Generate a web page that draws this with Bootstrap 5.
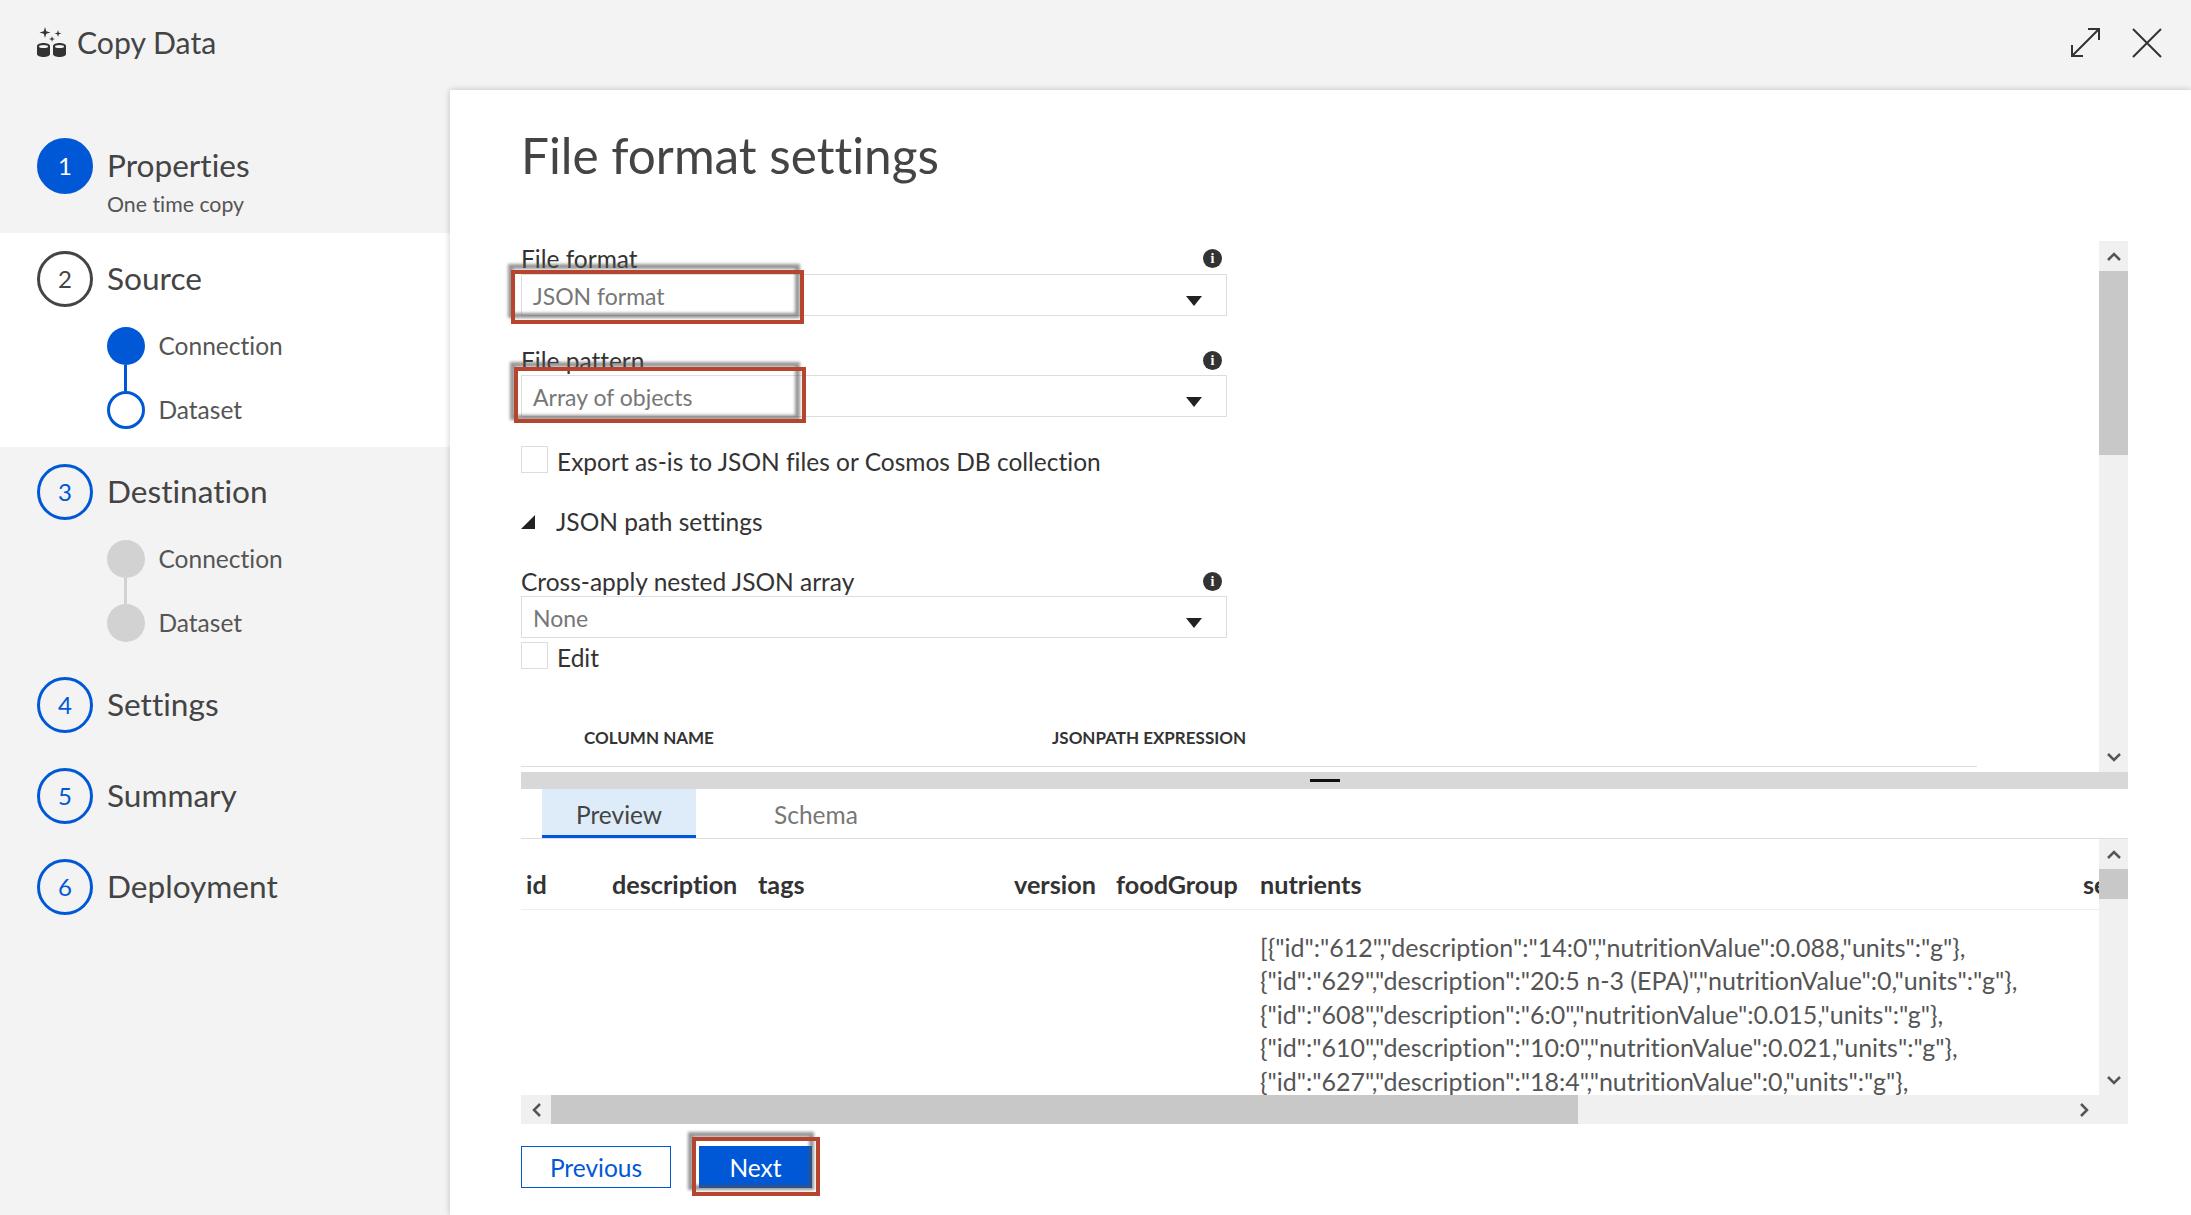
<!DOCTYPE html>
<html lang="en">
<head>
    <meta charset="UTF-8">
    <meta name="viewport" content="width=device-width, initial-scale=1.0">
    <title>Copy Data</title>
    <link href="https://cdn.jsdelivr.net/npm/bootstrap@5.3.0/dist/css/bootstrap.min.css" rel="stylesheet">
    <style>
        html, body { height: 1215px; overflow: hidden; }
        body { background: #f3f3f3; color: #444; font-family: "Lato", "Open Sans", sans-serif; font-size: 24.5px; font-variant-ligatures: none; }
        .top-bar { height: 85px; padding: 0 29px 0 37px; }
        .app-name { font-size: 30.2px; margin-left: 10px; line-height: 1; }
        .top-tools { gap: 31px; }
        .main-wrap { height: 1130px; }

        /* wizard steps */
        .wiz-side { width: 450px; flex: none; }
        .wiz-block { padding: 18px 0 18px 37px; }
        .wiz-block.first { padding-top: 53px; padding-bottom: 19px; height: 148px; }
        .wiz-block.open { background: #fff; }
        .wiz-block.plain { padding-top: 17px; padding-bottom: 0; }
        .wiz-block.tail { padding-top: 35px; padding-bottom: 0; }
        .step-dot { width: 56px; height: 56px; flex: none; border: 3px solid #0058d6; color: #0058d6; font-size: 24px; }
        .step-dot.on { background: #0058d6; color: #fff; }
        .step-dot.cur { border-color: #444; color: #444; }
        .step-name { font-size: 31.6px; margin-left: 14px; line-height: 1; color: #444; }
        .step-note { font-size: 21.3px; line-height: 20px; margin-left: 70px; color: #555; }
        .sub-list { margin: 20px 0 0 70px; }
        .sub-row { height: 38px; }
        .sub-dot { width: 38px; height: 38px; flex: none; }
        .sub-dot.fill { background: #0058d6; }
        .sub-dot.ring { border: 3px solid #0058d6; background: #fff; }
        .sub-dot.idle { background: #d2d2d2; }
        .sub-name { font-size: 24.5px; margin-left: 13.500px; color: #555; }
        .sub-link { width: 3px; height: 26px; margin-left: 17px; background: #0058d6; }
        .sub-link.idle { background: #d2d2d2; }

        /* right panel */
        .work-panel { margin-top: 5px; padding: 0 63px 0 71px; background: #fff; box-shadow: 0 0 6px rgba(0,0,0,.22); position: relative; }
        .page-title { height: 151px; margin: 0; font-size: 49.5px; font-weight: 400; line-height: 130px; color: #444; }
        .upper-pane { height: 531px; }
        .upper-form { padding-top: 2px; width: 1578px; }
        .fld-label { height: 31px; line-height: 33px; width: 706px; color: #333; }
        .fld-label.spaced { margin-top: 29px; height: 30px; }
        .info-mark { width: 19px; height: 19px; background: #333; color: #fff; font: 700 14px/19px "Liberation Serif", serif; text-align: center; margin-right: 5px; }
        .dd-box { width: 706px; height: 42px; padding: 0 14px 0 11px; border: 1.5px solid #ddd; color: #777; background: #fff; font-size: 23px; }
        .dd-box span { padding-top: 2px; }
        .dd-box svg { margin-right: 10px; margin-top: 11px; }
        .tick-row { height: 27px; color: #333; }
        .tick-row span { padding-top: 6px; }
        .tick-row.first { margin-top: 29px; }
        .tick-row.near { margin-top: 4px; }
        .tick-box { width: 27px; height: 27px; margin: 0 9px 0 0; border: 1.5px solid #ddd; border-radius: 0 !important; flex: none; }
        .path-row { margin-top: 34px; height: 30px; color: #333; }
        .path-row svg { margin-right: 21px; }
        .cols-head { margin-top: 50px; height: 48px; width: 1456px; border-bottom: 1.5px solid #ddd; font-size: 17px; font-weight: 700; line-height: 38px; color: #333; }
        .cols-head .c1 { width: 531px; padding-left: 63px; }
        .v-scroll { width: 29px; flex: none; background: #f0f0f0; height: 100%; }
        .v-btn { height: 30px; }
        .v-thumb { background: #c8c8c8; }
        .v-thumb.big { height: 184px; }
        .v-thumb.small { height: 30px; }
        .v-corner { height: 29px; }
        .splitter { height: 17px; background: #d8d8d8; }
        .split-grip { width: 30px; height: 3px; background: #111; }

        .tab-strip { height: 50px; padding-left: 21px; border-bottom: 1.5px solid #ddd; }
        .tab-strip .nav-link { height: 49px; padding: 0; font-size: 24.5px; line-height: 51px; text-align: center; color: #777; width: 154px; }
        .tab-strip .nav-link.active { background: #deecf9; color: #444; border-bottom: 3px solid #0058d6; }
        .tab-strip .nav-link.other { width: 242px; text-align: left; padding-left: 78px; }

        .lower-pane { height: 285px; }
        .grid-col { width: 1578px; }
        .grid-view { height: 256px; overflow: hidden; }
        .prev-grid { width: 1700px; table-layout: fixed; border-collapse: collapse; }
        .prev-grid th { height: 70px; padding: 23px 0 0 5px; font-weight: 700; font-size: 25.2px; color: #333; border-bottom: 1.5px solid #eee; white-space: nowrap; overflow: hidden; }
        .prev-grid td { padding: 21px 0 0 5px; vertical-align: top; color: #555; font-size: 25px; line-height: 33.6px; white-space: nowrap; }
        .h-scroll { height: 29px; background: #f0f0f0; }
        .h-btn { width: 30px; flex: none; }
        .h-thumb { width: 1027px; background: #c8c8c8; }

        .foot-row { margin-top: 22px; gap: 28px; }
        .wiz-btn { height: 42px; padding: 2px 0 0; border-radius: 0; font-size: 24.5px; line-height: 38px; }
        .wiz-btn.back { width: 150px; border: 1.5px solid #0058d6; color: #0058d6; background: #fff; }
        .wiz-btn.go { width: 113px; border: 0; background: #0058d6; color: #fff; }

        /* red call-out frames drawn over the screenshot */
        .anno-shade, .anno-red { position: absolute; pointer-events: none; }
        .anno-shade { border: 5px solid rgba(80,80,80,.6); filter: blur(1.5px); }
        .anno-red { border: 4px solid #b5452f; }
        .anno-a .anno-shade { left: -13px; top: -10px; width: 292px; height: 54px; }
        .anno-a .anno-red { left: -10px; top: -4px; width: 293px; height: 54px; }
        .anno-b .anno-shade { left: -11px; top: -13px; width: 290px; height: 58px; }
        .anno-b .anno-red { left: -7px; top: -8px; width: 292px; height: 56px; }
        .anno-c .anno-shade { left: -11px; top: -14px; width: 126px; height: 58px; }
        .anno-c .anno-red { left: -7px; top: -9px; width: 128px; height: 59px; }
    </style>
</head>
<body>

    <div class="top-bar d-flex align-items-center justify-content-between">
        <div class="d-flex align-items-center">
            <svg width="30" height="30" viewBox="0 0 30 30">
                <g fill="#333">
                    <path d="M8 0l1.2 4.3 4.3 1.2-4.3 1.2L8 11 6.8 6.7 2.500 5.500l4.300-1.200z"/>
                    <path d="M21 3l.8 2.700 2.700.8-2.700.8-.8 2.700-.8-2.700-2.700-.8 2.700-.8z"/>
                    <path d="M15 9l.7 2.300 2.300.7-2.300.7-.7 2.300-.7-2.300-2.300-.7 2.300-.7z"/>
                    <path d="M0 19c0-4 13-4 13 0v8c0 4-13 4-13 0z"/>
                    <path d="M16 19c0-4 13-4 13 0v8c0 4-13 4-13 0z"/>
                </g>
                <ellipse cx="6.500" cy="19.500" rx="4.500" ry="1.500" fill="#f3f3f3"/>
                <ellipse cx="22.500" cy="19.500" rx="4.500" ry="1.500" fill="#f3f3f3"/>
            </svg>
            <span class="app-name">Copy Data</span>
        </div>
        <div class="top-tools d-flex align-items-center">
            <svg width="31" height="31" viewBox="0 0 31 31" fill="none" stroke="#333" stroke-width="2">
                <path d="M2 29L29 2M18 2h11v11M2 18v11h11"/>
            </svg>
            <svg width="30" height="30" viewBox="0 0 30 30" fill="none" stroke="#333" stroke-width="2">
                <path d="M1 1l28 28M29 1L1 29"/>
            </svg>
        </div>
    </div>

    <div class="main-wrap d-flex">
        <div class="wiz-side">
            <div class="wiz-block first">
                <div class="d-flex align-items-center">
                    <div class="step-dot on rounded-circle d-flex align-items-center justify-content-center">1</div>
                    <div class="step-name">Properties</div>
                </div>
                <div class="step-note">One time copy</div>
            </div>
            <div class="wiz-block open">
                <div class="d-flex align-items-center">
                    <div class="step-dot cur rounded-circle d-flex align-items-center justify-content-center">2</div>
                    <div class="step-name">Source</div>
                </div>
                <div class="sub-list">
                    <div class="sub-row d-flex align-items-center"><div class="sub-dot fill rounded-circle"></div><div class="sub-name">Connection</div></div>
                    <div class="sub-link"></div>
                    <div class="sub-row d-flex align-items-center"><div class="sub-dot ring rounded-circle"></div><div class="sub-name">Dataset</div></div>
                </div>
            </div>
            <div class="wiz-block plain">
                <div class="d-flex align-items-center">
                    <div class="step-dot rounded-circle d-flex align-items-center justify-content-center">3</div>
                    <div class="step-name">Destination</div>
                </div>
                <div class="sub-list">
                    <div class="sub-row d-flex align-items-center"><div class="sub-dot idle rounded-circle"></div><div class="sub-name">Connection</div></div>
                    <div class="sub-link idle"></div>
                    <div class="sub-row d-flex align-items-center"><div class="sub-dot idle rounded-circle"></div><div class="sub-name">Dataset</div></div>
                </div>
            </div>
            <div class="wiz-block tail">
                <div class="d-flex align-items-center">
                    <div class="step-dot rounded-circle d-flex align-items-center justify-content-center">4</div>
                    <div class="step-name">Settings</div>
                </div>
            </div>
            <div class="wiz-block tail">
                <div class="d-flex align-items-center">
                    <div class="step-dot rounded-circle d-flex align-items-center justify-content-center">5</div>
                    <div class="step-name">Summary</div>
                </div>
            </div>
            <div class="wiz-block tail">
                <div class="d-flex align-items-center">
                    <div class="step-dot rounded-circle d-flex align-items-center justify-content-center">6</div>
                    <div class="step-name">Deployment</div>
                </div>
            </div>
        </div>

        <div class="work-panel flex-grow-1">
            <h1 class="page-title">File format settings</h1>

            <div class="upper-pane d-flex">
                <div class="upper-form flex-grow-1">
                    <div class="fld-label d-flex justify-content-between align-items-center">
                        <span>File format</span><span class="info-mark rounded-circle">i</span>
                    </div>
                    <div class="position-relative anno-a">
                        <div class="dd-box d-flex align-items-center justify-content-between">
                            <span>JSON format</span>
                            <svg width="16" height="10" viewBox="0 0 16 10"><path d="M0 0h16L8 10z" fill="#222"/></svg>
                        </div>
                        <div class="anno-shade"></div>
                        <div class="anno-red"></div>
                    </div>

                    <div class="fld-label spaced d-flex justify-content-between align-items-center">
                        <span>File pattern</span><span class="info-mark rounded-circle">i</span>
                    </div>
                    <div class="position-relative anno-b">
                        <div class="dd-box d-flex align-items-center justify-content-between">
                            <span>Array of objects</span>
                            <svg width="16" height="10" viewBox="0 0 16 10"><path d="M0 0h16L8 10z" fill="#222"/></svg>
                        </div>
                        <div class="anno-shade"></div>
                        <div class="anno-red"></div>
                    </div>

                    <label class="tick-row first d-flex align-items-center">
                        <input type="checkbox" class="form-check-input tick-box">
                        <span>Export as-is to JSON files or Cosmos DB collection</span>
                    </label>

                    <div class="path-row d-flex align-items-center">
                        <svg width="14" height="14" viewBox="0 0 14 14"><path d="M14 0v14H0z" fill="#222"/></svg>
                        <span>JSON path settings</span>
                    </div>

                    <div class="fld-label spaced d-flex justify-content-between align-items-center">
                        <span>Cross-apply nested JSON array</span><span class="info-mark rounded-circle">i</span>
                    </div>
                    <div class="dd-box d-flex align-items-center justify-content-between">
                        <span>None</span>
                        <svg width="16" height="10" viewBox="0 0 16 10"><path d="M0 0h16L8 10z" fill="#222"/></svg>
                    </div>
                    <label class="tick-row near d-flex align-items-center">
                        <input type="checkbox" class="form-check-input tick-box">
                        <span>Edit</span>
                    </label>

                    <div class="cols-head d-flex">
                        <div class="c1">COLUMN NAME</div>
                        <div>JSONPATH EXPRESSION</div>
                    </div>
                </div>
                <div class="v-scroll d-flex flex-column">
                    <div class="v-btn d-flex align-items-center justify-content-center">
                        <svg width="14" height="9" viewBox="0 0 14 9" fill="none" stroke="#555" stroke-width="2.500"><path d="M1 8l6-6 6 6"/></svg>
                    </div>
                    <div class="v-thumb big"></div>
                    <div class="flex-grow-1"></div>
                    <div class="v-btn d-flex align-items-center justify-content-center">
                        <svg width="14" height="9" viewBox="0 0 14 9" fill="none" stroke="#555" stroke-width="2.500"><path d="M1 1l6 6 6-6"/></svg>
                    </div>
                </div>
            </div>

            <div class="splitter d-flex align-items-center justify-content-center">
                <div class="split-grip"></div>
            </div>

            <ul class="nav tab-strip">
                <li class="nav-item"><a class="nav-link active" href="#">Preview</a></li>
                <li class="nav-item"><a class="nav-link other" href="#">Schema</a></li>
            </ul>

            <div class="lower-pane d-flex">
                <div class="grid-col">
                    <div class="grid-view">
                        <table class="prev-grid">
                            <colgroup>
                                <col width="86"><col width="146"><col width="256"><col width="102"><col width="144"><col width="823"><col width="143">
                            </colgroup>
                            <thead>
                                <tr><th>id</th><th>description</th><th>tags</th><th>version</th><th>foodGroup</th><th>nutrients</th><th>servings</th></tr>
                            </thead>
                            <tbody>
                                <tr>
                                    <td></td><td></td><td></td><td></td><td></td>
                                    <td>
                                        <div>[{"id":"612","description":"14:0","nutritionValue":0.088,"units":"g"},</div>
                                        <div>{"id":"629","description":"20:5 n-3 (EPA)","nutritionValue":0,"units":"g"},</div>
                                        <div>{"id":"608","description":"6:0","nutritionValue":0.015,"units":"g"},</div>
                                        <div>{"id":"610","description":"10:0","nutritionValue":0.021,"units":"g"},</div>
                                        <div>{"id":"627","description":"18:4","nutritionValue":0,"units":"g"},</div>
                                    </td>
                                    <td></td>
                                </tr>
                            </tbody>
                        </table>
                    </div>
                    <div class="h-scroll d-flex">
                        <div class="h-btn d-flex align-items-center justify-content-center">
                            <svg width="9" height="14" viewBox="0 0 9 14" fill="none" stroke="#555" stroke-width="2.500"><path d="M8 1L2 7l6 6"/></svg>
                        </div>
                        <div class="h-thumb"></div>
                        <div class="flex-grow-1"></div>
                        <div class="h-btn d-flex align-items-center justify-content-center">
                            <svg width="9" height="14" viewBox="0 0 9 14" fill="none" stroke="#555" stroke-width="2.500"><path d="M1 1l6 6-6 6"/></svg>
                        </div>
                    </div>
                </div>
                <div class="v-scroll d-flex flex-column">
                    <div class="v-btn d-flex align-items-center justify-content-center">
                        <svg width="14" height="9" viewBox="0 0 14 9" fill="none" stroke="#555" stroke-width="2.500"><path d="M1 8l6-6 6 6"/></svg>
                    </div>
                    <div class="v-thumb small"></div>
                    <div class="flex-grow-1"></div>
                    <div class="v-btn d-flex align-items-center justify-content-center">
                        <svg width="14" height="9" viewBox="0 0 14 9" fill="none" stroke="#555" stroke-width="2.500"><path d="M1 1l6 6 6-6"/></svg>
                    </div>
                    <div class="v-corner"></div>
                </div>
            </div>

            <div class="foot-row d-flex">
                <button type="button" class="btn wiz-btn back">Previous</button>
                <div class="position-relative anno-c">
                    <button type="button" class="btn wiz-btn go d-block">Next</button>
                    <div class="anno-shade"></div>
                    <div class="anno-red"></div>
                </div>
            </div>
        </div>
    </div>

    <script src="https://cdn.jsdelivr.net/npm/bootstrap@5.3.0/dist/js/bootstrap.bundle.min.js"></script>
</body>
</html>
